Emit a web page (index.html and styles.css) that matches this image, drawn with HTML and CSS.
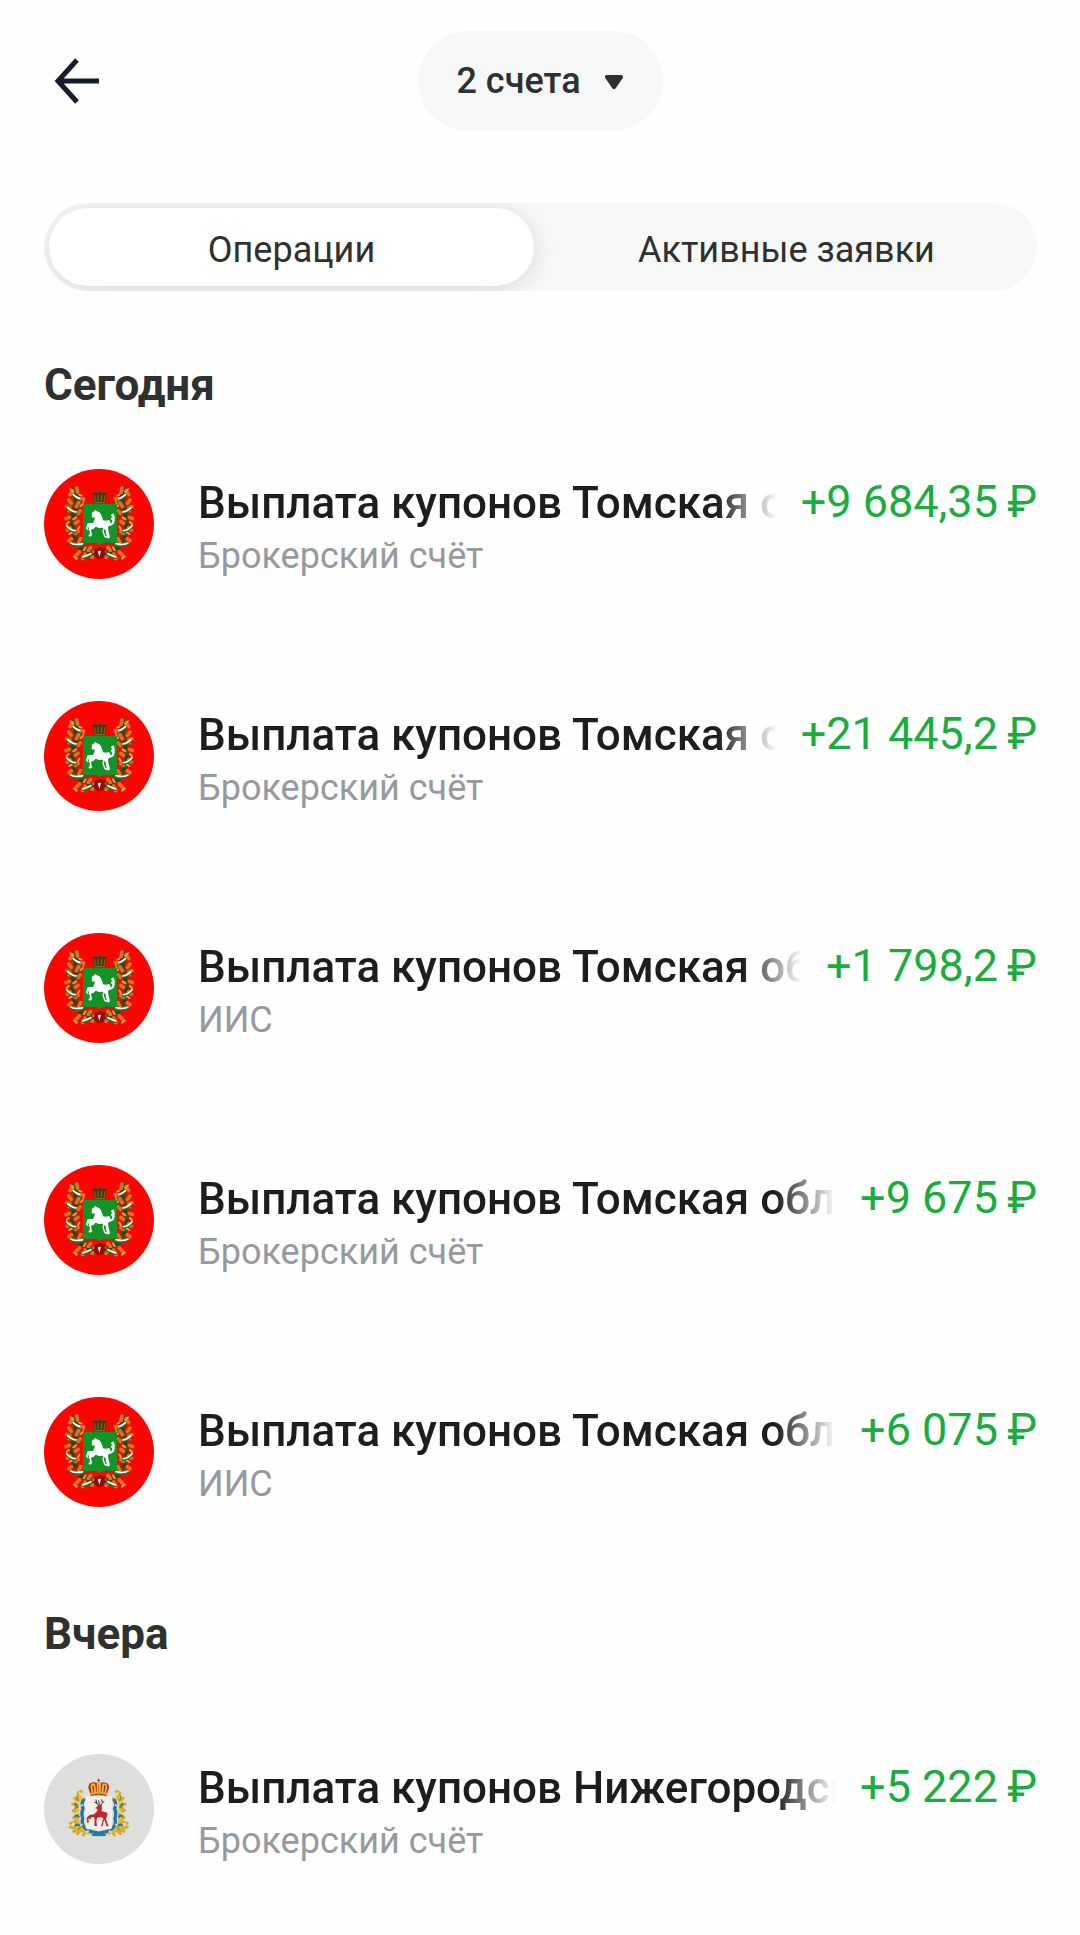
FILE: index.html
```html
<!DOCTYPE html>
<html lang="ru">
<head>
  <meta charset="UTF-8">
  <meta name="viewport" content="width=device-width, initial-scale=1">
  <title>Операции</title>
  <link rel="stylesheet" href="styles.css">
</head>
<body>

  <!-- Гербы -->
  <svg class="sprite" aria-hidden="true">
    <symbol id="leaves" viewBox="90 70 105 235">
      <g fill="none" stroke-linecap="round">
        <path d="M122 88Q132 125 120 165Q110 215 130 245Q150 275 192 280" stroke="#7a4018" stroke-width="21" stroke-dasharray="9 15"/>
        <path d="M122 88Q132 125 118 165Q108 215 130 245Q150 275 192 282" stroke="#6b3515" stroke-width="14"/>
        <path d="M116 92L108 104M128 84L131 97M140 118L148 116M104 120L112 130M134 128L127 140M98 140L107 143M132 160L139 153M96 176L106 172M132 184L124 190M100 210L110 202M132 214L124 220M112 236L104 242M140 236L134 248M126 286L136 276M146 296L154 282M170 262L163 272M176 292L170 284" stroke="#cd791d" stroke-width="11"/>
        <path d="M110 88L118 97M136 104L143 107M104 154L112 150M140 138L146 133M98 192L104 186M118 178L126 172M136 200L132 207M106 222L114 217M120 290L128 296M150 270L155 262M184 270L178 276" stroke="#e8a63a" stroke-width="6"/>
        <path d="M123 112L124 120M116 160L118 168M112 194L116 200M120 230L124 234M136 262L142 266M162 280L166 284" stroke="#3b391b" stroke-width="7"/>
        <path d="M118 106Q126 116 138 118M100 144Q110 158 126 158M97 200Q108 212 124 216M110 252Q126 262 148 254M146 293Q158 292 172 284" stroke="#0d7b2b" stroke-width="8"/>
        <path d="M118 104Q126 113 138 116M101 143Q111 154 126 156M98 197Q108 210 124 212M110 249Q126 257 146 251M146 291Q157 288 170 281" stroke="#fff" stroke-width="5"/>
      </g>
    </symbol>

    <symbol id="tomsk" viewBox="30 27 330 330">
      <circle cx="195" cy="192" r="165" fill="#fb0500"/>
      <use href="#leaves" x="90" y="70" width="105" height="235"/>
      <g transform="translate(392 0) scale(-1 1)">
        <use href="#leaves" x="90" y="70" width="105" height="235"/>
      </g>
      <path d="M181 268Q197 257 213 268Q220 294 196 298Q174 293 181 268Z" fill="#8c100b"/>
      <path d="M191 274L201 272L196 290Z" fill="#eee"/>
      <path d="M147 132H249V242Q249 249 241 249H205L197 256L189 249H155Q147 249 147 242Z" fill="#169326"/>
      <path d="M180 129L176 101Q184 94 192 101L197 89L203 101Q211 94 219 101L215 129Z" fill="#3c3b18"/>
      <path d="M184 123L182 106M192 123V104M202 123V104M211 123L213 106M180 127H215" fill="none" stroke="#97652b" stroke-width="3"/>
      <circle cx="197" cy="91" r="4" fill="#58551c"/>
      <path d="M146 132L151 118M249 132L244 119" stroke="#d8934a" stroke-width="4"/>
      <path d="M174 158L181 153L184 149L188 153Q199 156 202 165L207 180Q215 184 224 180Q232 184 228 194L222 202L224 216L228 231L224 236L217 232L218 227L214 209L207 203L195 204L185 200L178 207L171 209L174 227L166 230L163 225L168 222L165 205L159 195L161 190L176 191L181 181L183 170L177 174L173 169Z" fill="#fff"/>
      <path d="M178 190L163 192L158 204L163 209M211 200L207 215L213 230L219 232" fill="none" stroke="#fff" stroke-width="4"/>
      <path d="M224 191Q235 191 235 182L230 176L235 171L230 166L238 160L242 169V182Q240 197 225 197Z" fill="#fff"/>
    </symbol>

    <symbol id="wreath" viewBox="100 130 95 145">
      <g fill="none" stroke-linecap="round">
        <path d="M137 152Q122 175 129 205Q124 237 142 252Q160 264 170 260" stroke="#deb841" stroke-width="15"/>
        <path d="M132 144L142 139M122 160L132 163M116 177L127 179M144 166L152 162M118 196L127 201M119 218L127 213M109 235L124 230M109 246L124 250M119 259L132 254M130 266L140 256M148 270L154 260" stroke="#d1ac35" stroke-width="9"/>
        <path d="M148 166Q140 178 147 190Q141 205 146 220Q141 238 154 250Q168 262 194 264" stroke="#2476a8" stroke-width="10"/>
        <path d="M137 143L144 153M123 171L131 174M137 184L145 180M125 206L133 200M116 235L125 241M138 243L144 238M156 262L163 258" stroke="#f3dc7d" stroke-width="5"/>
        <path d="M124 176L130 186M124 214Q132 208 134 216M124 242Q130 236 136 242M176 270L194 271" stroke="#2476a8" stroke-width="6"/>
        <path d="M131 151Q125 160 132 166M124 190L131 184M133 253L140 247" stroke="#a98524" stroke-width="4"/>
      </g>
    </symbol>

    <symbol id="nizhny" viewBox="30 27 330 330">
      <circle cx="195" cy="192" r="165" fill="#dededc"/>
      <use href="#wreath" x="100" y="130" width="95" height="145"/>
      <g transform="translate(389 0) scale(-1 1)">
        <use href="#wreath" x="100" y="130" width="95" height="145"/>
      </g>
      <path d="M155 154H234V246Q234 253 226 253H202L194 260L186 253H163Q155 253 155 246Z" fill="#f0efee"/>
      <path d="M170 151L163 128Q163 112 180 112L193 114L208 112Q226 113 225 128L218 151Z" fill="#bd2a27"/>
      <path d="M176 147L172 124Q175 114 181 119L184 146M191 145V116H198V145M205 146L208 118Q219 116 217 127L213 147" fill="none" stroke="#efc33e" stroke-width="5"/>
      <path d="M168 145Q194 137 220 145V154Q194 147 168 154Z" fill="#deb12d"/>
      <path d="M171 151Q194 143 217 151" fill="none" stroke="#a92e25" stroke-width="3"/>
      <path d="M194 101V113M189 106H199" stroke="#805f34" stroke-width="3"/>
      <path d="M190 184L197 178L203 181L204 190L203 199L216 202Q224 205 218 216L216 222L222 239L225 244H217L216 238L210 222L202 216L190 218L187 227L189 243H181L182 225L180 216L169 216L163 221L165 232L159 233L158 218L167 210L180 208L188 200L191 192L184 190Z" fill="#c9272b"/>
      <path d="M182 214L173 214L166 222M213 218L207 229L203 244" fill="none" stroke="#c9272b" stroke-width="4"/>
      <path d="M195 181L188 175L186 164M190 176L181 171M200 181L205 174L203 163M205 174L211 168M196 178L194 166" fill="none" stroke="#4b2626" stroke-width="3"/>
    </symbol>
  </svg>

  <!-- Верхняя панель -->
  <header class="topbar">
    <button class="back" type="button" aria-label="Назад">
      <svg viewBox="0 0 46 46" aria-hidden="true">
        <path d="M23 2L4 23L23 44M5 23H45" fill="none" stroke="#151c2b" stroke-width="5"/>
      </svg>
    </button>
    <button class="accounts" type="button" aria-haspopup="listbox">
      2 счета
      <svg viewBox="0 0 20 18" aria-hidden="true">
        <path d="M2 5H16L9 15Z" fill="#2f3030" stroke="#2f3030" stroke-width="4" stroke-linejoin="round"/>
      </svg>
    </button>
  </header>

  <!-- Вкладки -->
  <nav class="tabs" role="tablist">
    <button class="tab active" type="button" role="tab" aria-selected="true">Операции</button>
    <button class="tab" type="button" role="tab" aria-selected="false">Активные заявки</button>
  </nav>

  <main>
    <section class="day">
      <h2>Сегодня</h2>
      <ul class="operations">
        <li class="operation">
          <svg class="emblem" aria-hidden="true"><use href="#tomsk"/></svg>
          <div class="info">
            <div class="line">
              <h3>Выплата купонов Томская область</h3>
              <span class="amount">+9 684,35&thinsp;₽</span>
            </div>
            <p>Брокерский счёт</p>
          </div>
        </li>
        <li class="operation">
          <svg class="emblem" aria-hidden="true"><use href="#tomsk"/></svg>
          <div class="info">
            <div class="line">
              <h3>Выплата купонов Томская область</h3>
              <span class="amount">+21 445,2&thinsp;₽</span>
            </div>
            <p>Брокерский счёт</p>
          </div>
        </li>
        <li class="operation">
          <svg class="emblem" aria-hidden="true"><use href="#tomsk"/></svg>
          <div class="info">
            <div class="line">
              <h3>Выплата купонов Томская область</h3>
              <span class="amount">+1 798,2&thinsp;₽</span>
            </div>
            <p>ИИС</p>
          </div>
        </li>
        <li class="operation">
          <svg class="emblem" aria-hidden="true"><use href="#tomsk"/></svg>
          <div class="info">
            <div class="line">
              <h3>Выплата купонов Томская область</h3>
              <span class="amount">+9 675&thinsp;₽</span>
            </div>
            <p>Брокерский счёт</p>
          </div>
        </li>
        <li class="operation">
          <svg class="emblem" aria-hidden="true"><use href="#tomsk"/></svg>
          <div class="info">
            <div class="line">
              <h3>Выплата купонов Томская область</h3>
              <span class="amount">+6 075&thinsp;₽</span>
            </div>
            <p>ИИС</p>
          </div>
        </li>
      </ul>
    </section>

    <section class="day">
      <h2>Вчера</h2>
      <ul class="operations">
        <li class="operation">
          <svg class="emblem" aria-hidden="true"><use href="#nizhny"/></svg>
          <div class="info">
            <div class="line">
              <h3>Выплата купонов Нижегородская область</h3>
              <span class="amount">+5 222&thinsp;₽</span>
            </div>
            <p>Брокерский счёт</p>
          </div>
        </li>
      </ul>
    </section>
  </main>

</body>
</html>
```

FILE: styles.css
```css
* {
  margin: 0;
  padding: 0;
  box-sizing: border-box;
}

body {
  font-family: Roboto, sans-serif;
  background: #fefefe;
  color: #2f3030;
  padding: 31px 43px 40px 44px;
}

button {
  font: inherit;
  color: inherit;
  border: none;
  background: none;
  cursor: pointer;
}

.sprite {
  position: absolute;
  width: 0;
  height: 0;
}

/* Верхняя панель */
.topbar {
  display: grid;
  grid-template-columns: 1fr auto 1fr;
  align-items: center;
  margin-bottom: 72px;
}

.back {
  justify-self: start;
  padding: 10px;
}

.back svg {
  display: block;
  width: 46px;
  height: 46px;
}

.accounts {
  display: flex;
  align-items: center;
  gap: 24px;
  height: 100px;
  padding: 0 38px;
  border-radius: 50px;
  background: #f6f8f8;
  font-size: 36px;
  font-weight: 500;
}

.accounts svg {
  width: 20px;
  height: 18px;
}

/* Вкладки */
.tabs {
  display: flex;
  gap: 10px;
  height: 88px;
  padding: 5px 8px 5px 5px;
  border-radius: 44px;
  background: #f6f8f8;
  overflow: hidden;
}

.tab {
  flex: 1;
  padding-top: 5px;
  border-radius: 39px;
  font-size: 36px;
}

.tab.active {
  background: #fff;
  box-shadow: 0 4px 24px rgba(0, 0, 0, 0.12);
}

/* Список операций */
.day h2 {
  padding-top: 68px;
  font-size: 44px;
  line-height: 52px;
  font-weight: 700;
}

.day + .day h2 {
  padding-top: 101px;
}

.operations {
  display: flex;
  flex-direction: column;
  gap: 122px;
  list-style: none;
  padding-top: 58px;
}

.day + .day .operations {
  padding-top: 94px;
}

.operation {
  display: flex;
  gap: 44px;
  height: 110px;
}

.emblem {
  flex: none;
  width: 110px;
  height: 110px;
}

.info {
  flex: 1;
  min-width: 0;
  padding-top: 8px;
}

.line {
  display: flex;
  gap: 24px;
  line-height: 52px;
}

.line h3 {
  flex: 1;
  min-width: 0;
  overflow: hidden;
  white-space: nowrap;
  font-size: 44px;
  font-weight: 500;
  color: #1d1d1e;
  mask-image: linear-gradient(to left, transparent, #000 60px);
}

.amount {
  white-space: nowrap;
  font-size: 45px;
  line-height: 50px;
  color: #18ae3d;
}

.info p {
  font-size: 36px;
  line-height: 55px;
  color: #96999d;
}
```
